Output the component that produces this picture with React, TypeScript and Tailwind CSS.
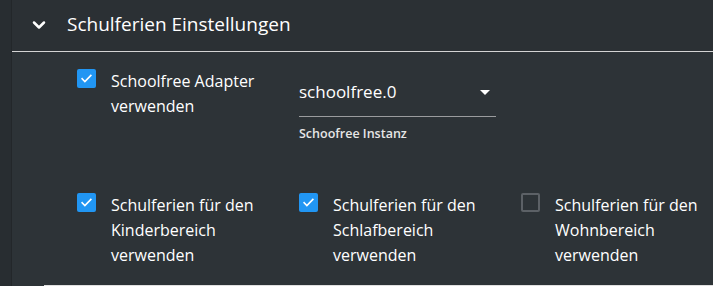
import { ChevronDown } from 'lucide-react'

const font = { fontFamily: '"Open Sans", "Noto Sans", sans-serif' }

const Check = ({ checked }: { checked: boolean }) =>
  checked ? (
    <div className="w-[19px] h-[19px] shrink-0 rounded-[2px] bg-[#2196f3] flex items-center justify-center">
      <svg width="13" height="13" viewBox="0 0 24 24" fill="none" stroke="white" strokeWidth="3" strokeLinecap="square">
        <path d="M4 12.5l5 5L20 6.5" />
      </svg>
    </div>
  ) : (
    <div className="w-[19px] h-[19px] shrink-0 rounded-[2px] border-2 border-[#5c6166]" />
  )

const Option = ({ checked, lines }: { checked: boolean; lines: string[] }) => (
  <div className="flex items-start gap-[15px]">
    <div className="pt-[2px]">
      <Check checked={checked} />
    </div>
    <div className="mt-[2px] text-[16px] leading-[25px] text-white whitespace-nowrap">
      {lines.map((l) => (
        <div key={l}>{l}</div>
      ))}
    </div>
  </div>
)

export default function App() {
  return (
    <div className="w-[713px] h-[286px] flex bg-[#2d3337] overflow-hidden" style={font}>
      <div className="w-[12px] shrink-0 h-full bg-[#282d31] border-r border-[#23272a]" />
      <div className="flex-1 flex flex-col relative">
        <div className="h-[52px] shrink-0 bg-[#2b3034] border-b border-[#d4d4d4] flex items-center">
          <ChevronDown className="ml-[17px] -mt-[2px] text-white" size={20} strokeWidth={3} />
          <span className="ml-[18px] -mt-[2px] text-[19px] text-white">Schulferien Einstellungen</span>
        </div>
        <div className="pl-[65px] pt-[15px] flex">
          <div className="w-[222px]">
            <Option checked lines={['Schoolfree Adapter', 'verwenden']} />
          </div>
          <div className="w-[197px] pt-[14px]">
            <div className="flex items-center justify-between border-b border-[#9a9c9e] pb-[13px]">
              <span className="text-[17px] leading-[22px] text-white">schoolfree.0</span>
              <svg width="10" height="5" viewBox="0 0 10 5" className="mr-[6px]">
                <path d="M0 0h10L5 5z" fill="white" />
              </svg>
            </div>
            <div className="mt-[8px] text-[12.5px] font-semibold text-[#e6e6e6]">Schoofree Instanz</div>
          </div>
        </div>
        <div className="pl-[65px] pt-[47px] flex">
          <div className="w-[222px]">
            <Option checked lines={['Schulferien für den', 'Kinderbereich', 'verwenden']} />
          </div>
          <div className="w-[222px]">
            <Option checked lines={['Schulferien für den', 'Schlafbereich', 'verwenden']} />
          </div>
          <div className="w-[222px]">
            <Option checked={false} lines={['Schulferien für den', 'Wohnbereich', 'verwenden']} />
          </div>
        </div>
        <div className="absolute left-[32px] right-0 bottom-0 h-[1px] bg-[#e0e0e0]" />
      </div>
    </div>
  )
}
